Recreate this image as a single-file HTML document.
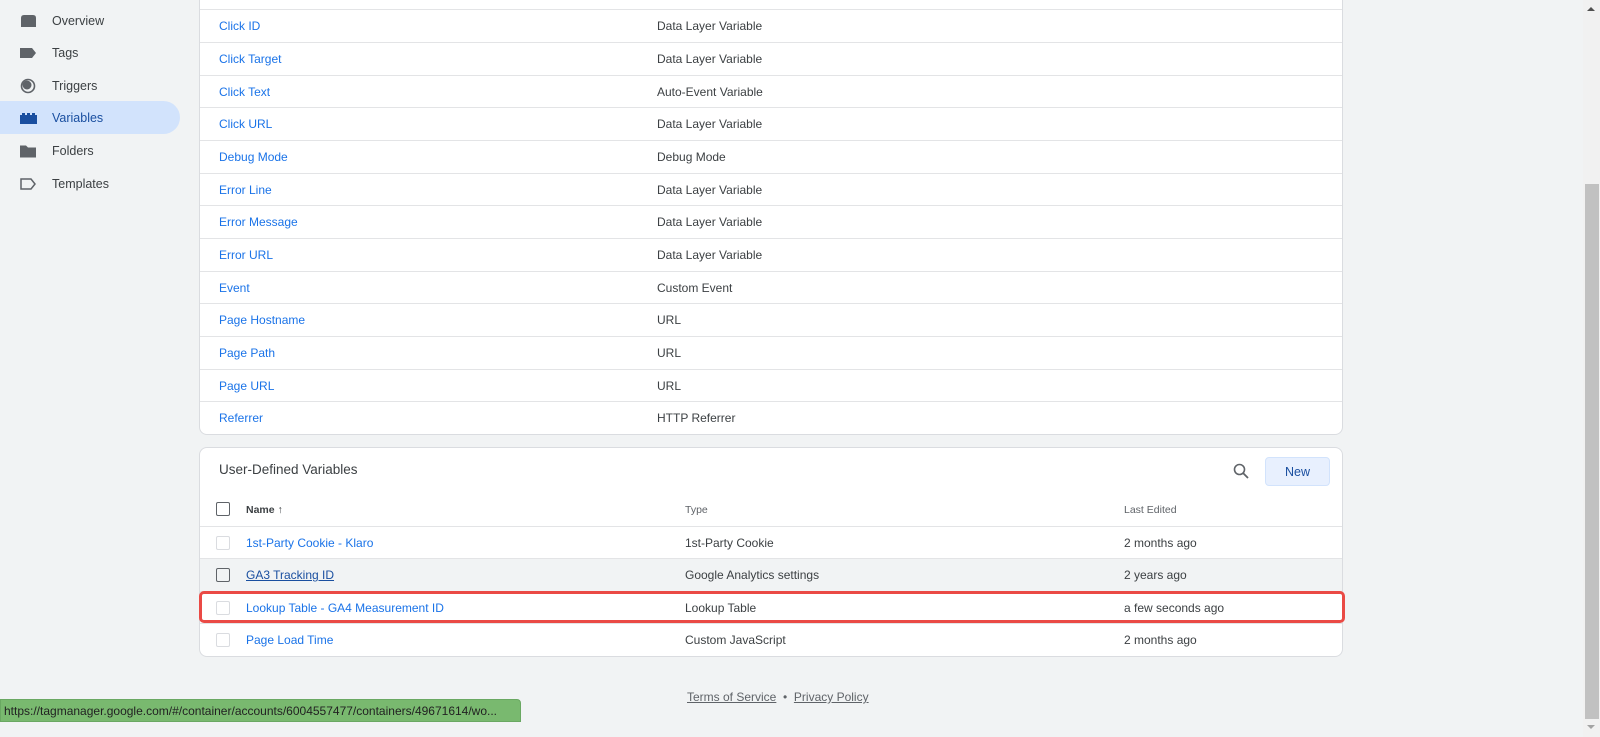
<!DOCTYPE html>
<html><head><meta charset="utf-8"><style>
*{box-sizing:border-box;margin:0;padding:0}
body{width:1600px;height:737px;overflow:hidden;background:#f1f3f4;font-family:"Liberation Sans",Arial,sans-serif;font-size:12px;color:#3c4043;position:relative}
.side{position:absolute;left:0;top:0;width:199px;height:737px}
.it{position:absolute;left:0;height:33px;width:180px;display:flex;align-items:center;padding-left:52px;font-size:12.5px;color:#3c4043}
.it.act{background:#d2e3fc;border-radius:0 17px 17px 0;color:#1a4fa0}
.ic{position:absolute;left:20px;top:50%;transform:translateY(-50%)}
.card{position:absolute;left:199px;width:1144px;background:#fff;border:1px solid #dadce0;border-radius:8px}
.row{position:absolute;left:0;right:0;height:33px;border-top:1px solid #e3e4e6;display:flex;align-items:center}
.lnk{color:#1a73e8;position:absolute}
.ty{position:absolute}
.cb{position:absolute;left:16px;width:14px;height:14px;border:1.5px solid #dadce0;border-radius:2px}
a{color:inherit}
</style></head><body>
<div class="side">
<div class="it" style="top:4px"><svg class="ic" width="17" height="14"><path d="M1 4q0-3 3-3h9q3 0 3 3v9H1z" fill="#5f6368"/></svg>Overview</div>
<div class="it" style="top:36px"><svg class="ic" width="17" height="12"><path d="M0 1h12l4 5-4 5H0z" fill="#5f6368"/></svg>Tags</div>
<div class="it" style="top:69px"><svg class="ic" width="16" height="16"><circle cx="8" cy="8" r="6.5" fill="none" stroke="#5f6368" stroke-width="1.6"/><circle cx="7" cy="7" r="4.5" fill="#5f6368"/></svg>Triggers</div>
<div class="it act" style="top:101px"><svg class="ic" width="17" height="12"><path d="M0 3h2V1h3v2h2V1h3v2h2V1h3v2h2v9H0z" fill="#1a4fa0"/></svg>Variables</div>
<div class="it" style="top:134px"><svg class="ic" width="16" height="13"><path d="M0 1h6l2 2h8v10H0z" fill="#5f6368"/></svg>Folders</div>
<div class="it" style="top:167px"><svg class="ic" width="16" height="12"><path d="M1 1h10l4 5-4 5H1z" fill="none" stroke="#5f6368" stroke-width="1.5"/></svg>Templates</div>
</div>

<div class="card" style="top:-20px;height:455px">
<div class="row" style="top:28px"><span class="lnk" style="left:19px">Click ID</span><span class="ty" style="left:457px">Data Layer Variable</span></div>
<div class="row" style="top:61px"><span class="lnk" style="left:19px">Click Target</span><span class="ty" style="left:457px">Data Layer Variable</span></div>
<div class="row" style="top:94px"><span class="lnk" style="left:19px">Click Text</span><span class="ty" style="left:457px">Auto-Event Variable</span></div>
<div class="row" style="top:126px"><span class="lnk" style="left:19px">Click URL</span><span class="ty" style="left:457px">Data Layer Variable</span></div>
<div class="row" style="top:159px"><span class="lnk" style="left:19px">Debug Mode</span><span class="ty" style="left:457px">Debug Mode</span></div>
<div class="row" style="top:192px"><span class="lnk" style="left:19px">Error Line</span><span class="ty" style="left:457px">Data Layer Variable</span></div>
<div class="row" style="top:224px"><span class="lnk" style="left:19px">Error Message</span><span class="ty" style="left:457px">Data Layer Variable</span></div>
<div class="row" style="top:257px"><span class="lnk" style="left:19px">Error URL</span><span class="ty" style="left:457px">Data Layer Variable</span></div>
<div class="row" style="top:290px"><span class="lnk" style="left:19px">Event</span><span class="ty" style="left:457px">Custom Event</span></div>
<div class="row" style="top:322px"><span class="lnk" style="left:19px">Page Hostname</span><span class="ty" style="left:457px">URL</span></div>
<div class="row" style="top:355px"><span class="lnk" style="left:19px">Page Path</span><span class="ty" style="left:457px">URL</span></div>
<div class="row" style="top:388px"><span class="lnk" style="left:19px">Page URL</span><span class="ty" style="left:457px">URL</span></div>
<div class="row" style="top:420px"><span class="lnk" style="left:19px">Referrer</span><span class="ty" style="left:457px">HTTP Referrer</span></div>
</div>

<div class="card" style="top:447px;height:210px">
<div style="position:absolute;left:19px;top:14px;font-size:13.5px;color:#3c4043">User-Defined Variables</div>
<svg style="position:absolute;left:1033px;top:15px" width="16" height="16"><circle cx="6.5" cy="6.5" r="5" fill="none" stroke="#5f6368" stroke-width="1.6"/><path d="M10 10l5 5" stroke="#5f6368" stroke-width="1.8"/></svg>
<div style="position:absolute;left:1065px;top:9px;width:65px;height:29px;background:#e8f0fe;border:1px solid #d2e3fc;border-radius:4px;color:#1a4fa0;font-size:12.5px;display:flex;align-items:center;justify-content:center">New</div>
<div class="cb" style="top:54px;border-color:#5f6368"></div>
<div style="position:absolute;left:46px;top:56px;font-size:10.5px;font-weight:bold;color:#3c4043">Name &#8593;</div>
<div style="position:absolute;left:485px;top:56px;font-size:10.5px;color:#5f6368">Type</div>
<div style="position:absolute;left:924px;top:56px;font-size:10.5px;color:#5f6368">Last Edited</div>
<div class="row" style="top:78px"><div class="cb"></div><span class="lnk" style="left:46px">1st-Party Cookie - Klaro</span><span class="ty" style="left:485px">1st-Party Cookie</span><span class="ty" style="left:924px">2 months ago</span></div>
<div class="row" style="top:110px;background:#f1f3f4"><div class="cb" style="border-color:#5f6368"></div><span class="lnk" style="left:46px;color:#1a4fa0;text-decoration:underline">GA3 Tracking ID</span><span class="ty" style="left:485px">Google Analytics settings</span><span class="ty" style="left:924px">2 years ago</span></div>
<div class="row" style="top:143px"><div class="cb"></div><span class="lnk" style="left:46px">Lookup Table - GA4 Measurement ID</span><span class="ty" style="left:485px">Lookup Table</span><span class="ty" style="left:924px">a few seconds ago</span></div>
<div class="row" style="top:175px"><div class="cb"></div><span class="lnk" style="left:46px">Page Load Time</span><span class="ty" style="left:485px">Custom JavaScript</span><span class="ty" style="left:924px">2 months ago</span></div>
</div>
<div style="position:absolute;left:199px;top:591px;width:1146px;height:32px;border:3px solid #ea4a45;border-radius:5px"></div>

<div style="position:absolute;left:687px;top:690px;font-size:12px;color:#5f6368"><span style="text-decoration:underline">Terms of Service</span> &nbsp;•&nbsp; <span style="text-decoration:underline">Privacy Policy</span></div>
<div style="position:absolute;left:0;top:699px;width:521px;height:23px;background:#79b96f;border:1px solid #6aa862;border-radius:0 4px 0 0;font-size:12px;color:#222;padding:4px 0 0 3px;white-space:nowrap;overflow:hidden">https://tagmanager.google.com/#/container/accounts/6004557477/containers/49671614/wo...</div>

<div style="position:absolute;left:1583px;top:0;width:17px;height:737px;background:#f1f1f1"></div>
<div style="position:absolute;left:1585px;top:184px;width:14px;height:535px;background:#c1c1c1"></div>
<div style="position:absolute;left:1587px;top:7px;width:0;height:0;border-left:4px solid transparent;border-right:4px solid transparent;border-bottom:4px solid #505050"></div>
<div style="position:absolute;left:1587px;top:725px;width:0;height:0;border-left:4px solid transparent;border-right:4px solid transparent;border-top:4px solid #a3a3a3"></div>
</body></html>
